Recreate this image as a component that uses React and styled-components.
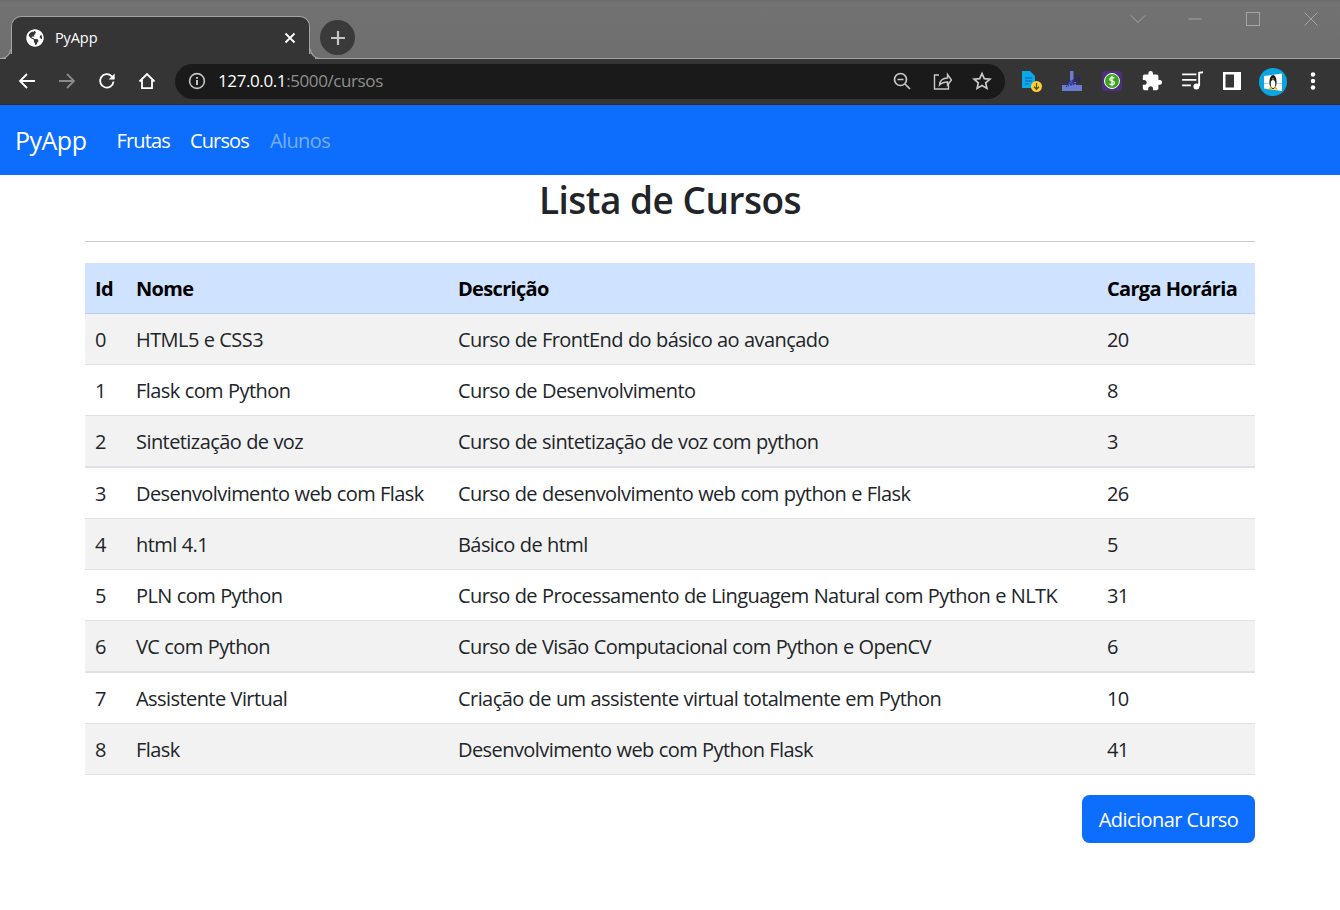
import React from 'react';
import styled, { createGlobalStyle } from 'styled-components';
import { FaGlobeAmericas } from 'react-icons/fa';
import { MdExtension } from 'react-icons/md';

const GlobalStyle = createGlobalStyle`
  html, body {
    margin: 0;
    padding: 0;
    background: #fff;
    font-family: "Open Sans", "Noto Sans", sans-serif;
    overflow: hidden;
  }
`;

const cursos = [
  [0, 'HTML5 e CSS3', 'Curso de FrontEnd do básico ao avançado', 20],
  [1, 'Flask com Python', 'Curso de Desenvolvimento', 8],
  [2, 'Sintetização de voz', 'Curso de sintetização de voz com python', 3],
  [3, 'Desenvolvimento web com Flask', 'Curso de desenvolvimento web com python e Flask', 26],
  [4, 'html 4.1', 'Básico de html', 5],
  [5, 'PLN com Python', 'Curso de Processamento de Linguagem Natural com Python e NLTK', 31],
  [6, 'VC com Python', 'Curso de Visão Computacional com Python e OpenCV', 6],
  [7, 'Assistente Virtual', 'Criação de um assistente virtual totalmente em Python', 10],
  [8, 'Flask', 'Desenvolvimento web com Python Flask', 41],
];

const Page = styled.div`
  width: 1340px;
  height: 910px;
  overflow: hidden;
  background: #fff;
`;

const TabStrip = styled.div`
  height: 58px;
  display: flex;
  align-items: flex-end;
  padding-left: 11px;
  background: linear-gradient(#6b6b63 0, #727272 2px, #6e6e6e 100%);
  border-bottom: 1px solid #a3a3a3;
  box-sizing: content-box;
`;

const Tab = styled.div`
  position: relative;
  width: 299px;
  height: 43px;
  margin-bottom: -1px;
  box-sizing: border-box;
  display: flex;
  align-items: center;
  padding: 0 13px 1px 14px;
  background: #353535;
  border: 1px solid #a3a3a3;
  border-bottom: none;
  border-radius: 10px 10px 0 0;
  z-index: 1;

  &::before,
  &::after {
    content: '';
    position: absolute;
    bottom: 0;
    width: 10px;
    height: 10px;
    box-sizing: border-box;
    border-bottom: 1px solid #a3a3a3;
  }
  &::before {
    left: -11px;
    border-right: 1px solid #a3a3a3;
    border-bottom-right-radius: 10px;
    box-shadow: 5px 5px 0 #353535;
  }
  &::after {
    right: -11px;
    border-left: 1px solid #a3a3a3;
    border-bottom-left-radius: 10px;
    box-shadow: -5px 5px 0 #353535;
  }
`;

const TabTitle = styled.span`
  flex: 1;
  margin-left: 11px;
  font-size: 14.5px;
  letter-spacing: -0.1px;
  color: #fff;
`;

const TabClose = styled.svg`
  width: 12px;
  height: 12px;
  stroke: #fff;
  stroke-width: 1.8;
  fill: none;
`;

const NewTab = styled.div`
  width: 35px;
  height: 35px;
  margin: 0 0 3px 10px;
  border-radius: 50%;
  background: #3a3a3a;
  display: flex;
  align-items: center;
  justify-content: center;
  align-self: flex-end;
`;

const WindowControls = styled.div`
  margin-left: auto;
  align-self: flex-start;
  display: flex;
  height: 38px;
`;

const WindowButton = styled.div`
  width: 58px;
  height: 38px;
  display: flex;
  align-items: center;
  justify-content: center;
  color: #a4a4a4;
  margin-left: ${(p) => p.$nudge || 0}px;
`;

const Toolbar = styled.div`
  height: 46px;
  display: flex;
  align-items: center;
  padding: 0 0 1px 7px;
  box-sizing: border-box;
  background: #353535;
  border-bottom: 1px solid #2c2c2c;
`;

const ToolCell = styled.div`
  width: 40px;
  height: 40px;
  flex: none;
  display: flex;
  align-items: center;
  justify-content: center;
  color: ${(p) => p.color || '#fff'};
  margin-left: ${(p) => p.$nudge || 0}px;
`;

const AvatarCell = styled(ToolCell)`
  padding: 1px 0 0 1px;
  box-sizing: border-box;
`;

const Omnibox = styled.div`
  width: 830px;
  height: 35px;
  margin: 0 7px 0 8px;
  flex: none;
  display: flex;
  align-items: center;
  border-radius: 18px;
  background: #1a1a1a;
  padding: 0 3px 0 12px;
  box-sizing: border-box;
`;

const InfoWrap = styled.div`
  width: 20px;
  height: 20px;
  color: #c4c4c4;
`;

const Url = styled.div`
  flex: 1;
  margin: 0 0 1px 11px;
  font-size: 17px;
  letter-spacing: -0.4px;
  color: #fff;
  span {
    color: #8f8f8f;
  }
`;

const OmniAction = styled.div`
  width: 40px;
  height: 35px;
  flex: none;
  display: flex;
  align-items: center;
  justify-content: center;
  color: #c9c9c9;
`;

const Navbar = styled.nav`
  height: 70px;
  background: #0d6efd;
  display: flex;
  align-items: center;
  padding-left: 15px;
`;

const Brand = styled.a`
  font-size: 25px;
  letter-spacing: -0.5px;
  color: #fff;
  margin-right: 20px;
`;

const NavLink = styled.a`
  font-size: 20px;
  letter-spacing: ${(p) => (p.$disabled ? -0.6 : -0.85)}px;
  padding: 0 10px 0 ${(p) => (p.$disabled ? 11 : 10)}px;
  color: ${(p) => (p.$disabled ? 'rgba(255,255,255,.45)' : '#fff')};
`;

const Main = styled.main`
  padding: 0 85px;
`;

const Title = styled.h1`
  margin: 0;
  height: 66px;
  line-height: 49px;
  text-align: center;
  font-size: 37px;
  font-weight: 600;
  letter-spacing: -0.5px;
  color: #212529;
`;

const Rule = styled.hr`
  margin: 0 0 21px;
  border: 0;
  border-top: 1px solid #cbcbcb;
`;

const Table = styled.table`
  width: 1170px;
  table-layout: fixed;
  border-collapse: separate;
  border-spacing: 0;
  font-size: 20px;
  letter-spacing: -0.57px;
  word-spacing: 0.33px;
  color: #212529;
`;

const HeadCell = styled.th`
  height: 51px;
  padding: 0 10px;
  box-sizing: border-box;
  text-align: left;
  font-weight: 700;
  letter-spacing: -0.68px;
  color: #000;
  white-space: nowrap;
  background: #cfe2ff;
  border-bottom: 1px solid #b9cce6;
`;

const Cell = styled.td`
  height: ${(p) => (p.$tall ? 52 : 51)}px;
  padding: 0 10px;
  box-sizing: border-box;
  white-space: nowrap;
  background: ${(p) => (p.$striped ? '#f2f2f2' : '#fff')};
  border-bottom: ${(p) => (p.$tall ? 2 : 1)}px solid #dee2e6;
`;

const Actions = styled.div`
  display: flex;
  justify-content: flex-end;
  margin-top: 20px;
`;

const AddButton = styled.button`
  width: 173px;
  height: 48px;
  border: 0;
  border-radius: 7.5px;
  background: #0d6efd;
  color: #fff;
  font-family: inherit;
  font-size: 20px;
  letter-spacing: -0.55px;
`;

const Icon = ({ children, size = 20, ...rest }) => (
  <svg width={size} height={size} viewBox="0 0 20 20" fill="none" stroke="currentColor" strokeWidth="1.8" {...rest}>
    {children}
  </svg>
);

const NetMark = styled.text`
  font-family: "Liberation Sans", sans-serif;
  font-size: 7px;
  font-weight: 700;
  font-style: italic;
  fill: #19208e;
`;

const PenguinAvatar = () => (
  <svg width="28" height="28" viewBox="0 0 28 28">
    <circle cx="14" cy="14" r="14" fill="#0ba5e2" />
    <path d="M5 8 23 5.500V23L5 20.500z" fill="#fff" />
    <path d="M5 15.500H23M13.500 6.500V21.500" stroke="#8fdcf6" strokeWidth="1" />
    <ellipse cx="14" cy="14" rx="3.600" ry="7" fill="#1c1c1c" />
    <ellipse cx="14" cy="16" rx="2.300" ry="4" fill="#fff" />
    <path d="M9 21.500 11.800 18l1.400 3.500zM19 21.500 16.200 18l-1.400 3.500z" fill="#f2b90f" />
    <path d="M12.800 10.500h2.400l-1.200 1.400z" fill="#f2b90f" />
  </svg>
);

const App = () => (
  <Page>
    <GlobalStyle />
    <TabStrip>
      <Tab>
        <FaGlobeAmericas size={18} color="#fff" />
        <TabTitle>PyApp</TabTitle>
        <TabClose viewBox="0 0 12 12"><path d="M1.500 1.500l9 9M10.500 1.500l-9 9" /></TabClose>
      </Tab>
      <NewTab>
        <Icon size={20} stroke="#c4c4c4" strokeWidth="2.200"><path d="M10 3v14M3 10h14" /></Icon>
      </NewTab>
      <WindowControls>
        <WindowButton>
          <Icon strokeWidth="1"><path d="M3 6.500l7 7 7-7" /></Icon>
        </WindowButton>
        <WindowButton $nudge={-1}>
          <Icon strokeWidth="1"><path d="M3.500 10h13" /></Icon>
        </WindowButton>
        <WindowButton>
          <Icon strokeWidth="1"><rect x="3.500" y="3.500" width="13" height="13" /></Icon>
        </WindowButton>
        <WindowButton>
          <Icon strokeWidth="1"><path d="M3.500 3.500l13 13M16.500 3.500l-13 13" /></Icon>
        </WindowButton>
      </WindowControls>
    </TabStrip>
    <Toolbar>
      <ToolCell>
        <Icon><path d="M18 10H3M10 3l-7 7 7 7" /></Icon>
      </ToolCell>
      <ToolCell color="#8a8a8a">
        <Icon><path d="M2 10h15M10 3l7 7-7 7" /></Icon>
      </ToolCell>
      <ToolCell>
        <Icon><path d="M16.500 10.500a6.700 6.700 0 1 1-1.800-5.200L17 7.500" /><path d="M17.600 2.500v6h-6" fill="#fff" strokeWidth="0" /></Icon>
      </ToolCell>
      <ToolCell>
        <Icon><path d="M2.500 10.500 10 3l7.500 7.500M5 9v8.200h10V9" /></Icon>
      </ToolCell>
      <Omnibox>
        <InfoWrap>
          <Icon strokeWidth="1.600"><circle cx="10" cy="10" r="7.400" /><path d="M10 9v5M10 6v1.800" strokeWidth="2" /></Icon>
        </InfoWrap>
        <Url>127.0.0.1<span>:5000/cursos</span></Url>
        <OmniAction>
          <Icon strokeWidth="1.700"><circle cx="8.500" cy="8.500" r="6" /><path d="M5.500 8.500h6M13 13l5 5" /></Icon>
        </OmniAction>
        <OmniAction>
          <Icon strokeWidth="1.400"><path d="M7 4H2.500v14h14v-5" /><path d="M7.500 14c.5-4.500 3.500-7 8-7V3.500l4 5.500-4 5V11c-3.500 0-6 1-8 3z" /></Icon>
        </OmniAction>
        <OmniAction>
          <Icon strokeWidth="1.700"><path d="M10 2.500l2.300 5.100 5.600.6-4.200 3.700 1.200 5.500L10 14.600 5.100 17.400l1.200-5.500L2.100 8.200l5.600-.6z" /></Icon>
        </OmniAction>
      </Omnibox>
      <ToolCell>
        <svg width="24" height="24" viewBox="0 0 24 24">
          <path d="M2 2h8l5 5v12H2z" fill="#09a8e8" />
          <path d="M5 9h7M5 12h7M5 15h4" stroke="#0a5fa8" strokeWidth="1.200" />
          <circle cx="16.500" cy="17.500" r="5.500" fill="#f8d330" />
          <path d="M16.500 14v6M14 17.800l2.500 2.500 2.500-2.500" stroke="#5a4a10" strokeWidth="1.300" fill="none" />
        </svg>
      </ToolCell>
      <ToolCell>
        <svg width="20" height="20" viewBox="0 0 20 20">
          <path d="M8 0h3.500v11H14v3h6v6H0v-6h6v-3h2z" fill="#6c7ad0" />
          <NetMark x="3" y="14" transform="rotate(-18 10 12)">.NET</NetMark>
        </svg>
      </ToolCell>
      <ToolCell>
        <svg width="20" height="20" viewBox="0 0 20 20">
          <rect width="20" height="20" rx="3" fill="#4d2f7f" />
          <circle cx="10" cy="10" r="7.500" fill="#3aa61b" stroke="#fff" strokeWidth="1" />
          <path d="M12.500 7.200C11 6 7.800 6.300 7.800 8.200c0 2.300 4.700 1.300 4.700 3.600 0 2-3.300 2.200-5 .9M10 4.800v10.400" stroke="#fff" strokeWidth="1.300" fill="none" />
        </svg>
      </ToolCell>
      <ToolCell>
        <MdExtension size={22} />
      </ToolCell>
      <ToolCell>
        <Icon size={22} strokeWidth="1.700"><path d="M1 4h13M1 9h13M1 14h8M16.500 14.500V2.500l3.500-.5" /><circle cx="14" cy="15" r="2.700" fill="#fff" stroke="none" /></Icon>
      </ToolCell>
      <ToolCell>
        <svg width="18" height="18" viewBox="0 0 18 18">
          <path d="M0 0h18v18H0zM2.500 2.500v13H11v-13z" fill="#fff" fillRule="evenodd" />
        </svg>
      </ToolCell>
      <AvatarCell>
        <PenguinAvatar />
      </AvatarCell>
      <ToolCell $nudge={1}>
        <svg width="6" height="20" viewBox="0 0 6 20">
          <circle cx="3" cy="3.500" r="2.200" fill="#fff" />
          <circle cx="3" cy="10" r="2.200" fill="#fff" />
          <circle cx="3" cy="16.500" r="2.200" fill="#fff" />
        </svg>
      </ToolCell>
    </Toolbar>
    <Navbar>
      <Brand>PyApp</Brand>
      <NavLink>Frutas</NavLink>
      <NavLink>Cursos</NavLink>
      <NavLink $disabled>Alunos</NavLink>
    </Navbar>
    <Main>
      <Title>Lista de Cursos</Title>
      <Rule />
      <Table>
        <colgroup>
          <col width="41" />
          <col width="322" />
          <col width="649" />
          <col width="158" />
        </colgroup>
        <thead>
          <tr>
            <HeadCell>Id</HeadCell>
            <HeadCell>Nome</HeadCell>
            <HeadCell>Descrição</HeadCell>
            <HeadCell>Carga Horária</HeadCell>
          </tr>
        </thead>
        <tbody>
          {cursos.map(([id, nome, descricao, carga]) => {
            const rowProps = { $striped: id % 2 === 0, $tall: id === 2 || id === 6 };
            return (
              <tr key={id}>
                <Cell {...rowProps}>{id}</Cell>
                <Cell {...rowProps}>{nome}</Cell>
                <Cell {...rowProps}>{descricao}</Cell>
                <Cell {...rowProps}>{carga}</Cell>
              </tr>
            );
          })}
        </tbody>
      </Table>
      <Actions>
        <AddButton>Adicionar Curso</AddButton>
      </Actions>
    </Main>
  </Page>
);

export default App;
